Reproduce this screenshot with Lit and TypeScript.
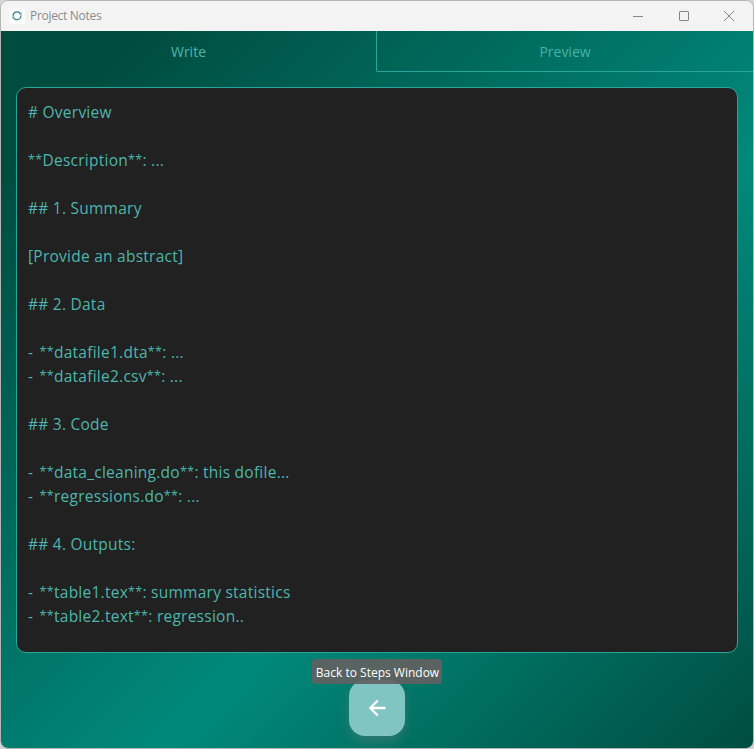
import { LitElement, html, css, svg } from "lit";
import { customElement, property } from "lit/decorators.js";

const NOTES = [
  "# Overview",
  "",
  "**Description**: ...",
  "",
  "## 1. Summary",
  "",
  "[Provide an abstract]",
  "",
  "## 2. Data",
  "",
  "- **datafile1.dta**: ...",
  "- **datafile2.csv**: ...",
  "",
  "## 3. Code",
  "",
  "- **data_cleaning.do**: this dofile...",
  "- **regressions.do**: ...",
  "",
  "## 4. Outputs:",
  "",
  "- **table1.tex**: summary statistics",
  "- **table2.text**: regression..",
];

@customElement("title-bar")
export class TitleBar extends LitElement {
  @property() label = "";

  static styles = css`
    :host {
      display: flex;
      align-items: center;
      height: 30px;
      flex: none;
      background: #f3f3f3;
      color: #8c8c8c;
      font-size: 12px;
      padding-left: 8px;
    }
    .logo {
      width: 16px;
      height: 16px;
      background: #fcfcfc;
      margin-right: 5px;
    }
    .name {
      flex: 1;
      letter-spacing: -0.3px;
      line-height: 28px;
    }
    .controls {
      display: flex;
      margin-right: 1px;
    }
    .control {
      width: 45.5px;
      height: 28px;
      display: flex;
      align-items: center;
      justify-content: center;
    }
    svg {
      display: block;
    }
  `;

  private glyph(d: string) {
    return html`<span class="control">
      <svg width="12" height="12" viewBox="0 0 12 12" fill="none" stroke="#858585">
        ${svg`<path d=${d} />`}
      </svg>
    </span>`;
  }

  render() {
    return html`
      <svg class="logo" viewBox="0 0 16 16" fill="none" stroke="#327d8c" stroke-width="1.2">
        <path d="M11.3 5.6A3.9 3.9 0 0 0 4.2 8.4M4.5 9.4A3.9 3.9 0 0 0 11.9 7.4" />
        <path d="M12.2 4.6v1.7h-1.4M3.8 10.4V9h1.2" stroke-width="0.8" />
      </svg>
      <span class="name">${this.label}</span>
      <span class="controls">
        ${this.glyph("M1 6.5h10")}
        ${this.glyph("M2 1.5h8a.5.5 0 0 1 .5.5v8a.5.5 0 0 1-.5.5h-8a.5.5 0 0 1-.5-.5v-8a.5.5 0 0 1 .5-.5z")}
        ${this.glyph("M1 1l10 10M11 1L1 11")}
      </span>
    `;
  }
}

@customElement("app-root")
export class AppRoot extends LitElement {
  static styles = css`
    :host {
      display: block;
      height: 749px;
      box-sizing: border-box;
      background: #d5d5d5;
      font-family: "Open Sans", "Noto Sans", sans-serif;
    }
    .window {
      box-sizing: border-box;
      width: 754px;
      height: 749px;
      border: 1px solid #b5b5b5;
      border-radius: 8px;
      overflow: hidden;
      display: flex;
      flex-direction: column;
      background: #f3f3f3;
    }
    .body {
      flex: 1;
      display: flex;
      flex-direction: column;
      background: linear-gradient(135deg, #004d40 10%, #00897b 60%, #004d40 100%);
    }
    .tabs {
      display: grid;
      grid-template-columns: 375px 1fr;
      height: 41px;
      flex: none;
      font-size: 14px;
      color: #4db6ac;
      text-align: center;
      line-height: 40px;
    }
    .tab {
      padding-top: 1px;
      box-sizing: border-box;
      height: 41px;
    }
    .tab.idle {
      border-left: 1px solid #26a69a;
      border-bottom: 1px solid #26a69a;
      border-bottom-left-radius: 2px;
    }
    .tab.idle .caption {
      opacity: 0.95;
    }
    .editor {
      box-sizing: border-box;
      height: 566px;
      margin: 15px 15px 0;
      padding: 12px 11px;
      border: 1px solid #26a69a;
      border-radius: 10px;
      background: #212121;
      color: #4db6ac;
      font-size: 15.5px;
      line-height: 24px;
      letter-spacing: 0.25px;
    }
    .line {
      height: 24px;
      white-space: pre;
    }
    .bullet {
      letter-spacing: 1.25px;
    }
    .stars {
      font-size: 12.5px;
      line-height: 1;
      vertical-align: 2px;
      letter-spacing: 0.35px;
    }
    .footer {
      display: flex;
      justify-content: center;
      padding-top: 27px;
    }
    .back {
      position: relative;
      width: 56px;
      height: 56px;
      border-radius: 16px;
      background: #80c5c1;
      box-shadow: 0 6px 12px rgba(128, 128, 128, 0.35);
      display: flex;
      align-items: center;
      justify-content: center;
    }
    .tip {
      position: absolute;
      left: 50%;
      bottom: 52px;
      transform: translateX(-50%);
      box-sizing: border-box;
      width: 130px;
      height: 25px;
      padding-left: 1px;
      border-radius: 4px;
      background: rgba(97, 97, 97, 0.92);
      color: #fff;
      font-size: 12px;
      line-height: 27px;
      text-align: center;
      white-space: nowrap;
    }
  `;

  private renderLine(line: string) {
    const parts = line.split(/(^- |\*\*)/).filter((p) => p);
    return html`<div class="line">${parts.map((p) =>
      p === "**" || p === "- "
        ? html`<span class=${p === "**" ? "stars" : "bullet"}>${p}</span>`
        : p
    )}</div>`;
  }

  render() {
    return html`
      <div class="window">
        <title-bar label="Project Notes"></title-bar>
        <div class="body">
          <div class="tabs">
            <div class="tab"><span class="caption">Write</span></div>
            <div class="tab idle"><span class="caption">Preview</span></div>
          </div>
          <div class="editor">${NOTES.map((l) => this.renderLine(l))}</div>
          <div class="footer">
            <div class="back">
              <svg width="24" height="24" viewBox="0 0 24 24" fill="none" stroke="#fff" stroke-width="2.3">
                <path d="M20.5 12H5.2M12.8 4.5L5.3 12l7.5 7.5" />
              </svg>
              <div class="tip">Back to Steps Window</div>
            </div>
          </div>
        </div>
      </div>
    `;
  }
}
